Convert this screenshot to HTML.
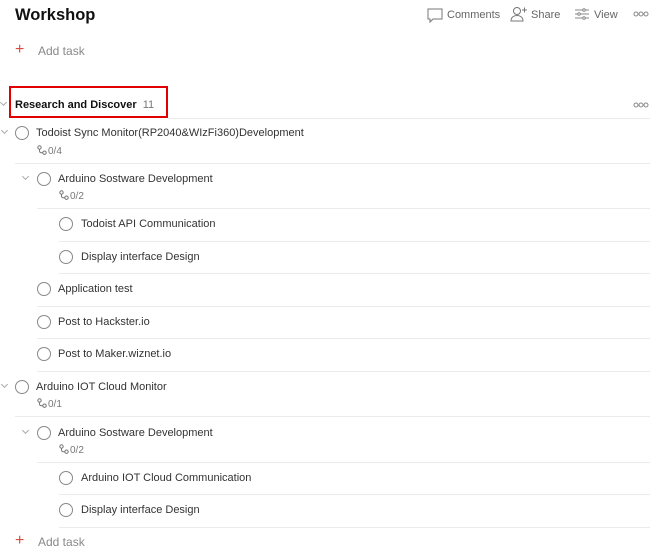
<!DOCTYPE html>
<html><head><meta charset="utf-8"><style>
*{margin:0;padding:0;box-sizing:border-box}
body{width:672px;height:555px;background:#fff;font-family:"Liberation Sans",sans-serif;color:#202020;position:relative;overflow:hidden}
.a{position:absolute;white-space:nowrap}
.t{font-size:11px;color:#333}
.s{font-size:10px;color:#777}
.c{position:absolute;width:14px;height:14px;border:1.2px solid #888;border-radius:50%}
.l{position:absolute;height:1px;background:#ebebeb;right:22px}
.ch{position:absolute;width:5px;height:5px;border-right:1px solid #aaa;border-bottom:1px solid #aaa;transform:rotate(45deg)}
.hd{font-size:11px;color:#666}
.si{display:inline-block;vertical-align:-1px;margin-right:1px}
</style></head><body>
<div class="a" style="left:15px;top:6px;font-size:16.5px;font-weight:bold;color:#111">Workshop</div>

<svg class="a" style="left:427px;top:8px" width="16" height="15" viewBox="0 0 16 15"><path d="M1 1h14v10H6l-3 3v-3H1z" fill="none" stroke="#777" stroke-width="1"/></svg>
<div class="a hd" style="left:447px;top:9px">Comments</div>
<svg class="a" style="left:510px;top:6px" width="18" height="16" viewBox="0 0 18 16"><circle cx="7" cy="5" r="3.5" fill="none" stroke="#777"/><path d="M1 15c0-4 3-5.5 6-5.5s6 1.5 6 5.5z" fill="none" stroke="#777"/><path d="M12 4h5M14.5 1.5v5" stroke="#777"/></svg>
<div class="a hd" style="left:531px;top:9px">Share</div>
<svg class="a" style="left:575px;top:8px" width="14" height="12" viewBox="0 0 14 12"><path d="M0 2h14M0 6h14M0 10h14" stroke="#888"/><circle cx="9" cy="2" r="1.3" fill="#fff" stroke="#888"/><circle cx="4" cy="6" r="1.3" fill="#fff" stroke="#888"/><circle cx="9" cy="10" r="1.3" fill="#fff" stroke="#888"/></svg>
<div class="a hd" style="left:594px;top:9px">View</div>
<svg class="a" style="left:633px;top:11px" width="16" height="6" viewBox="0 0 16 6"><circle cx="3" cy="3" r="2" fill="none" stroke="#888"/><circle cx="8" cy="3" r="2" fill="none" stroke="#888"/><circle cx="13" cy="3" r="2" fill="none" stroke="#888"/></svg>

<div class="a" style="left:15px;top:43px;color:#dc4c3e;font-size:16px;line-height:14px">+</div>
<div class="a" style="left:38px;top:44px;color:#888;font-size:12px">Add task</div>

<div class="a" style="left:9px;top:86px;width:159px;height:32px;border:2px solid #e00000"></div>
<div class="ch" style="left:1px;top:100px"></div>
<div class="a" style="left:15px;top:99px;font-size:11px;font-weight:bold;color:#111">Research and Discover <span style="font-weight:normal;color:#777;margin-left:3px">11</span></div>
<svg class="a" style="left:633px;top:102px" width="16" height="6" viewBox="0 0 16 6"><circle cx="3" cy="3" r="2" fill="none" stroke="#888"/><circle cx="8" cy="3" r="2" fill="none" stroke="#888"/><circle cx="13" cy="3" r="2" fill="none" stroke="#888"/></svg>
<div class="l" style="left:168px;top:118px"></div>

<!-- row1 -->
<div class="ch" style="left:2px;top:128px"></div>
<div class="c" style="left:15px;top:126px"></div>
<div class="a t" style="left:36px;top:127px">Todoist Sync Monitor(RP2040&amp;WIzFi360)Development</div>
<div class="a s" style="left:37px;top:145px"><svg class="si" width="10" height="10" viewBox="0 0 10 10"><circle cx="2.5" cy="2.5" r="1.7" fill="none" stroke="#777"/><path d="M2.5 4.2v1.5q0 2 2 2h1" fill="none" stroke="#777"/><circle cx="7.5" cy="7.7" r="1.7" fill="none" stroke="#777"/></svg>0/4</div>
<div class="l" style="left:15px;top:163px"></div>

<div class="ch" style="left:23px;top:174px"></div>
<div class="c" style="left:37px;top:172px"></div>
<div class="a t" style="left:58px;top:173px">Arduino Sostware Development</div>
<div class="a s" style="left:59px;top:190px"><svg class="si" width="10" height="10" viewBox="0 0 10 10"><circle cx="2.5" cy="2.5" r="1.7" fill="none" stroke="#777"/><path d="M2.5 4.2v1.5q0 2 2 2h1" fill="none" stroke="#777"/><circle cx="7.5" cy="7.7" r="1.7" fill="none" stroke="#777"/></svg>0/2</div>
<div class="l" style="left:37px;top:208px"></div>

<div class="c" style="left:59px;top:217px"></div>
<div class="a t" style="left:81px;top:218px">Todoist API Communication</div>
<div class="l" style="left:59px;top:241px"></div>

<div class="c" style="left:59px;top:250px"></div>
<div class="a t" style="left:81px;top:251px">Display interface Design</div>
<div class="l" style="left:59px;top:273px"></div>

<div class="c" style="left:37px;top:282px"></div>
<div class="a t" style="left:58px;top:283px">Application test</div>
<div class="l" style="left:37px;top:306px"></div>

<div class="c" style="left:37px;top:315px"></div>
<div class="a t" style="left:58px;top:316px">Post to Hackster.io</div>
<div class="l" style="left:37px;top:338px"></div>

<div class="c" style="left:37px;top:347px"></div>
<div class="a t" style="left:58px;top:348px">Post to Maker.wiznet.io</div>
<div class="l" style="left:37px;top:371px"></div>

<div class="ch" style="left:2px;top:382px"></div>
<div class="c" style="left:15px;top:380px"></div>
<div class="a t" style="left:36px;top:381px">Arduino IOT Cloud Monitor</div>
<div class="a s" style="left:37px;top:398px"><svg class="si" width="10" height="10" viewBox="0 0 10 10"><circle cx="2.5" cy="2.5" r="1.7" fill="none" stroke="#777"/><path d="M2.5 4.2v1.5q0 2 2 2h1" fill="none" stroke="#777"/><circle cx="7.5" cy="7.7" r="1.7" fill="none" stroke="#777"/></svg>0/1</div>
<div class="l" style="left:15px;top:416px"></div>

<div class="ch" style="left:23px;top:428px"></div>
<div class="c" style="left:37px;top:426px"></div>
<div class="a t" style="left:58px;top:427px">Arduino Sostware Development</div>
<div class="a s" style="left:59px;top:444px"><svg class="si" width="10" height="10" viewBox="0 0 10 10"><circle cx="2.5" cy="2.5" r="1.7" fill="none" stroke="#777"/><path d="M2.5 4.2v1.5q0 2 2 2h1" fill="none" stroke="#777"/><circle cx="7.5" cy="7.7" r="1.7" fill="none" stroke="#777"/></svg>0/2</div>
<div class="l" style="left:37px;top:462px"></div>

<div class="c" style="left:59px;top:471px"></div>
<div class="a t" style="left:81px;top:472px">Arduino IOT Cloud Communication</div>
<div class="l" style="left:59px;top:494px"></div>

<div class="c" style="left:59px;top:503px"></div>
<div class="a t" style="left:81px;top:504px">Display interface Design</div>
<div class="l" style="left:59px;top:527px"></div>

<div class="a" style="left:15px;top:534px;color:#dc4c3e;font-size:16px;line-height:14px">+</div>
<div class="a" style="left:38px;top:535px;color:#888;font-size:12px">Add task</div>
</body></html>
